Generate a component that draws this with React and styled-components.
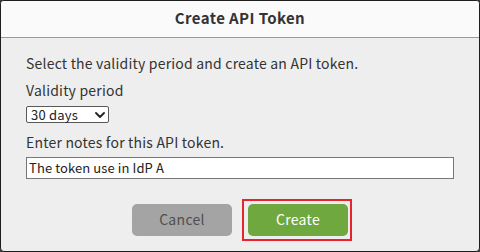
import styled, { createGlobalStyle } from "styled-components";

const FONT = `"Noto Sans CJK JP", "Liberation Sans", Arial, sans-serif`;

const GlobalStyle = createGlobalStyle`
  html, body {
    margin: 0;
    padding: 0;
    background: #3c3c3c;
  }
  body {
    font-family: ${FONT};
  }
`;

const Dialog = styled.div`
  box-sizing: border-box;
  width: 480px;
  height: 252px;
  border: 1px solid #1e1e1e;
  border-radius: 4px;
  overflow: hidden;
  background: #eeeeee;
  display: flex;
  flex-direction: column;
  color: #333;
`;

const Header = styled.div`
  box-sizing: border-box;
  height: 37px;
  flex: none;
  padding-bottom: 3px;
  background: #fafafa;
  border-bottom: 1px solid #9a9a9a;
  display: flex;
  align-items: center;
  justify-content: center;
  font-size: 15px;
  letter-spacing: 0.4px;
  font-weight: bold;
  line-height: 20px;
  color: #333;
`;

const Body = styled.div`
  padding: 16px 25px 0;
  display: flex;
  flex-direction: column;
  align-items: flex-start;
`;

const Text = styled.div`
  font-size: 14px;
  letter-spacing: 0.2px;
  line-height: 18px;
  margin-top: ${(p) => p.$mt || 0}px;
`;

const SelectBox = styled.div`
  position: relative;
  box-sizing: border-box;
  margin-top: 7px;
  width: 83px;
  height: 17px;
  border: 1px solid #5a5a5a;
  border-radius: 2px;
  background: #fff;
  display: flex;
  align-items: center;
`;

const Select = styled.select`
  appearance: none;
  box-sizing: border-box;
  flex: none;
  width: 100%;
  height: 21px;
  margin: -3px 0;
  padding: 0 0 1px 4px;
  border: none;
  background: transparent;
  font-family: ${FONT};
  font-size: 13px;
  letter-spacing: 0.2px;
  color: #222;
  outline: none;
`;

const Chevron = styled.svg`
  position: absolute;
  right: 3px;
  top: 5px;
  width: 10px;
  height: 6px;
  pointer-events: none;
`;

const Input = styled.input`
  box-sizing: border-box;
  margin-top: 6px;
  width: 428px;
  height: 22px;
  padding: 0 2px 1px;
  border: 1px solid #767676;
  border-radius: 0;
  background: #fff;
  font-family: ${FONT};
  font-size: 13px;
  letter-spacing: 0.1px;
  color: #222;
  outline: none;
`;

const Actions = styled.div`
  align-self: stretch;
  margin-top: 25px;
  display: flex;
  justify-content: center;
  gap: 16px;
`;

const Highlight = styled.span`
  position: relative;
  display: flex;

  &::after {
    content: "";
    position: absolute;
    top: -5px;
    bottom: -5px;
    left: -6px;
    right: -4px;
    border: 2px solid #e6242b;
    pointer-events: none;
  }
`;

const Button = styled.button`
  width: 100px;
  height: 32px;
  padding: 0 0 2px;
  border: none;
  border-radius: 5px;
  font-family: ${FONT};
  font-size: 14px;
  letter-spacing: 0.3px;
  background: ${(p) => (p.$primary ? "#6fa83f" : "#a4a4a4")};
  color: ${(p) => (p.$primary ? "#fff" : "#4f4f4f")};
`;

export default function App() {
  return (
    <>
      <GlobalStyle />
      <Dialog>
        <Header>Create API Token</Header>
        <Body>
          <Text>Select the validity period and create an API token.</Text>
          <Text $mt={9}>Validity period</Text>
          <SelectBox>
            <Select defaultValue="30">
              <option value="30">30 days</option>
              <option value="60">60 days</option>
              <option value="90">90 days</option>
            </Select>
            <Chevron viewBox="0 0 10 6">
              <path
                d="M1 1 L5 5 L9 1"
                fill="none"
                stroke="#222"
                strokeWidth="1.8"
                strokeLinecap="round"
                strokeLinejoin="round"
              />
            </Chevron>
          </SelectBox>
          <Text $mt={10}>Enter notes for this API token.</Text>
          <Input defaultValue="The token use in IdP A" />
          <Actions>
            <Button>Cancel</Button>
            <Highlight>
              <Button $primary>Create</Button>
            </Highlight>
          </Actions>
        </Body>
      </Dialog>
    </>
  );
}
